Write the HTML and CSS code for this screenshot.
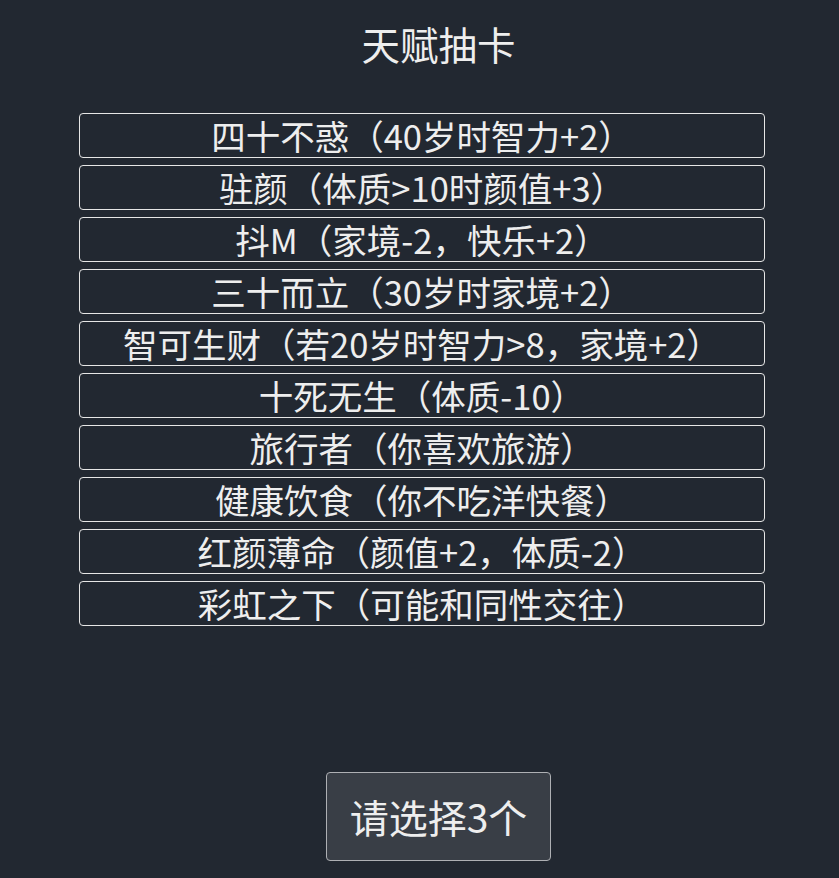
FILE: index.html
```html
<!DOCTYPE html>
<html lang="zh-CN">
	<head>
		<meta charset="UTF-8" />
		<meta name="viewport" content="width=device-width, initial-scale=1.0" />
		<title>天赋抽卡</title>
		<link rel="stylesheet" href="styles.css">
	</head>
	<body>
		<div class="page">
			<h1 class="title">天赋抽卡</h1>
			<ul class="talents">
				<li>四十不惑（40岁时智力+2）</li>
				<li>驻颜（体质&gt;10时颜值+3）</li>
				<li>抖M（家境-2，快乐+2）</li>
				<li>三十而立（30岁时家境+2）</li>
				<li>智可生财（若20岁时智力&gt;8，家境+2）</li>
				<li>十死无生（体质-10）</li>
				<li>旅行者（你喜欢旅游）</li>
				<li>健康饮食（你不吃洋快餐）</li>
				<li>红颜薄命（颜值+2，体质-2）</li>
				<li>彩虹之下（可能和同性交往）</li>
			</ul>
			<div class="footer">
				<button class="confirm">请选择3个</button>
			</div>
		</div>
	</body>
</html>
```

FILE: styles.css
```css
* {
	box-sizing: border-box;
}
body {
	margin: 0;
	background-color: #222831;
	color: #eeeeee;
	font-family: "Noto Sans CJK SC", sans-serif;
}

.page {
	padding: 16px 0 0 38px;
}

.title {
	margin: 0;
	font-size: 38.5px;
	font-weight: normal;
	line-height: 55px;
	text-align: center;
}

.talents {
	margin: 42px 0 0 41px;
	padding: 0;
	width: 686px;
	list-style: none;
	display: flex;
	flex-direction: column;
	gap: 7px;
}

.talents li {
	height: 45px;
	line-height: 43px;
	border: 1px solid #e6e6e6;
	border-radius: 4px;
	font-size: 34.5px;
	text-align: center;
	white-space: nowrap;
	cursor: pointer;
}

.footer {
	display: flex;
	justify-content: center;
	margin-top: 146px;
}

.confirm {
	appearance: none;
	height: 89px;
	padding: 0 23px;
	border: 1px solid #aeb0b4;
	border-radius: 4px;
	background-color: #393e46;
	color: #eeeeee;
	font-family: inherit;
	font-size: 39px;
	line-height: 55px;
	cursor: pointer;
}
```
